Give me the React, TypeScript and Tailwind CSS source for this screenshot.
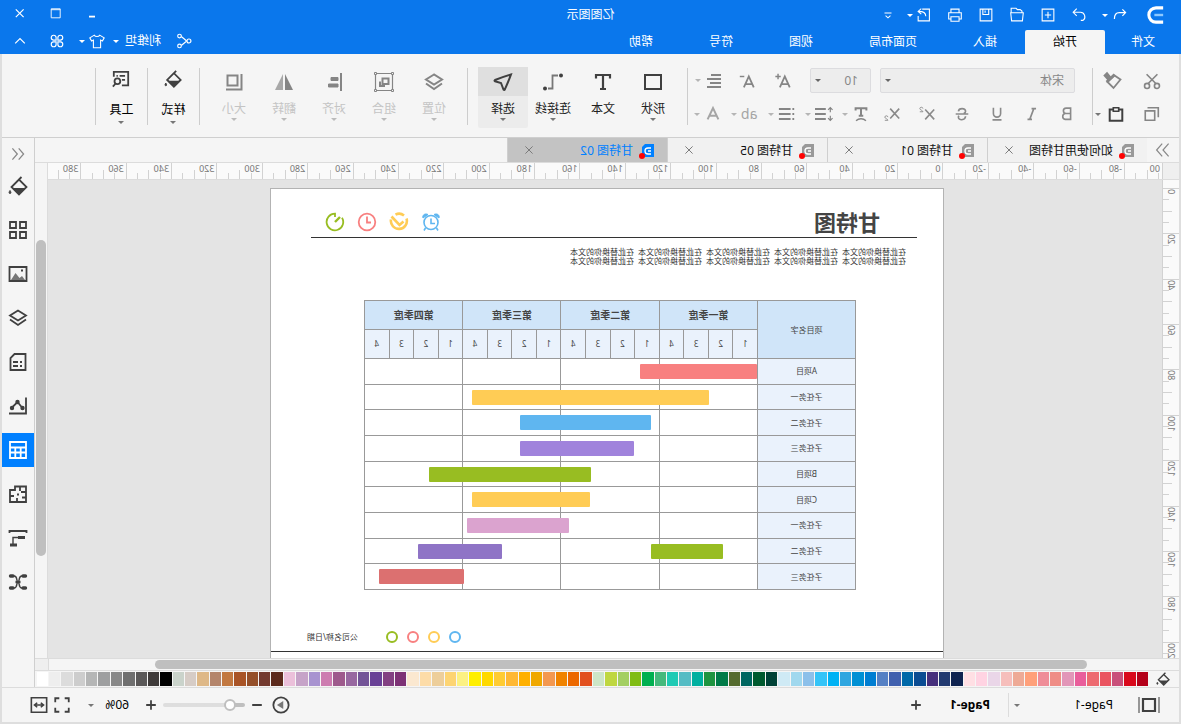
import type { ReactNode } from "react";
import { useState } from "react";

type IconProps = { children: ReactNode; size?: string; weight?: number };

function Icon({ children, size = "size-5", weight = 1.5 }: IconProps) {
    return (
        <svg viewBox="0 0 20 20" className={`${size} shrink-0`} fill="none" stroke="currentColor" strokeWidth={weight} aria-hidden="true">
            {children}
        </svg>
    );
}

const Caret = ({ className = "text-[#777]" }: { className?: string }) => (
    <svg viewBox="0 0 8 4" className={`block h-[3px] w-[6px] shrink-0 ${className}`} aria-hidden="true">
        <path d="M0 0h8L4 4z" fill="currentColor" />
    </svg>
);

const bucket = (
    <>
        <path d="M9 3.500 16.500 11 9 18.500 1.500 11zM9.500 4 6.500 1" />
        <path d="M2.500 12h13L9 18z" fill="currentColor" stroke="none" />
        <path d="M18 14.500c1.200 1.600 1.200 3 0 3s-1.200-1.400 0-3z" fill="currentColor" strokeWidth="1" />
    </>
);

const layers = (
    <>
        <path d="m10 2.500 8 5-8 5-8-5z" />
        <path d="m2 11.500 8 5.500 8-5.500" />
    </>
);

const quickTools = [
    { label: "Redo", icon: <path d="m12.500 3 4 4-4 4M16 7H8.500a5 5 0 0 0-3 9H8" /> },
    { label: "New", icon: <path d="M3.500 3.500h13v13h-13zM10 6.500v7M6.500 10h7" /> },
    { label: "Open", icon: <path d="M4.500 7.500V5.500l2-1.500h3l1.500-1.500h5.500v5M3 7.500h14l-1 9H4z" /> },
    { label: "Save", icon: <path d="M3.500 3.500h13v13h-13zM7 3.500v6h6.500v-6M11 5v2.500" /> },
    { label: "Print", icon: <path d="M5.500 7.500v-4h9v4M5.500 14.500H3v-7h14v7h-2.500M5.500 12h9v5h-9z" /> },
    { label: "Export", icon: <path d="M12 3.500H4v13h12.500V11M8 11.500C8 8 10 6 16 6M13 3l3.500 3-3.500 3" /> },
];

const menuTabs = ["插入", "页面布局", "视图", "符号", "帮助"];

function TitleBar() {
    return (
        <header className="shrink-0 bg-[#0a77ec] text-white">
            <div className="grid h-[30px] grid-cols-[1fr_auto_1fr] items-center">
                <div className="flex items-center pl-[10px]">
                    <svg viewBox="0 0 20 20" className="mr-[11px] h-[22px] w-[30px]" fill="none" stroke="white" aria-hidden="true">
                        <path d="M3.500 3.500H10a6.500 6.500 0 0 1 0 13H3.500" strokeWidth="2.800" />
                        <path d="M3.500 10h8" strokeWidth="2.200" stroke="#8cc8ff" />
                    </svg>
                    <button type="button" aria-label="Undo" className="flex w-5 justify-center">
                        <Icon size="size-4"><path d="m7 3-4 4 4 4M3.500 7h7.500c4 0 6 3 6 8" /></Icon>
                    </button>
                    <button type="button" aria-label="Undo history" className="mr-[5px] flex w-[10px] justify-center"><Caret className="text-white" /></button>
                    {quickTools.map((tool) => (
                        <button key={tool.label} type="button" aria-label={tool.label} className="flex w-[31px] justify-center">
                            <Icon size="size-[18px]" weight={1.2}>{tool.icon}</Icon>
                        </button>
                    ))}
                    <button type="button" aria-label="Export options" className="-ml-[6px] flex w-[10px] justify-center"><Caret className="text-white" /></button>
                    <button type="button" aria-label="Customize" className="flex w-[34px] justify-center">
                        <Icon size="size-[14px]"><path d="M5 7h10M6.500 11l3.500 3 3.500-3" /></Icon>
                    </button>
                </div>
                <h1 className="text-[12px]">亿图图示</h1>
                <div className="flex justify-end pr-[2px] pb-[4px]">
                    <button type="button" aria-label="Minimize" className="flex w-9 justify-center"><Icon size="size-3" weight={3}><path d="M5 16h10" /></Icon></button>
                    <button type="button" aria-label="Maximize" className="flex w-9 justify-center"><Icon size="size-3"><path d="M3 3h15v15H3zM3 4.500h15" /></Icon></button>
                    <button type="button" aria-label="Close" className="flex w-9 justify-center"><Icon size="size-3" weight={2}><path d="m4 4 13 13M17 4 4 17" /></Icon></button>
                </div>
            </div>
            <div className="flex h-6 items-stretch text-[12px]">
                <button type="button" className="w-[76px]">文件</button>
                <button type="button" className="w-20 rounded-t-xs bg-[#f5f5f5] text-black">开始</button>
                {menuTabs.map((tab) => (
                    <button key={tab} type="button" className="px-7">{tab}</button>
                ))}
                <div className="ml-auto flex items-center pb-[2px]">
                    <button type="button" aria-label="Share" className="mr-[14px]">
                        <Icon size="size-[18px]" weight={1.3}>
                            <path d="m7 10 6-5M7 10l6 5" />
                            <circle cx="4.500" cy="10" r="2.200" /><circle cx="15" cy="4.500" r="2" /><circle cx="15" cy="15.500" r="2" />
                        </Icon>
                    </button>
                    <button type="button" className="flex items-center gap-[6px]">利维坦<Caret className="text-white" /></button>
                    <button type="button" aria-label="Theme" className="mr-[5px] ml-[7px] flex items-center gap-[3px]">
                        <Icon size="size-[18px]" weight={1.2}><path d="M7 3.500c1 2 5 2 6 0l5 3-2 3.500-2-1v8.500H6V9l-2 1-2-3.500z" /></Icon>
                        <Caret className="text-white" />
                    </button>
                    <button type="button" aria-label="Apps" className="flex w-[34px] justify-center">
                        <Icon size="size-[18px]" weight={1.3}>
                            <path d="M9 9H6a2.700 2.700 0 1 1 3-3zM11 9V6a2.700 2.700 0 1 1 3 3zM9 11v3a2.700 2.700 0 1 1-3-3zM11 11h3a2.700 2.700 0 1 1-3 3z" />
                        </Icon>
                    </button>
                    <button type="button" aria-label="Collapse ribbon" className="flex w-10 justify-center"><Icon size="size-4"><path d="m4 13 6-6 6 6" /></Icon></button>
                </div>
            </div>
        </header>
    );
}

const Divider = () => <div className="h-[57px] w-px shrink-0 bg-[#cdcdcd]" />;

const textStyles = [
    { label: "Bold", icon: <path d="M6 3.500h5a3 3 0 0 1 0 6H6zM6 9.500h6a3.300 3.300 0 0 1 0 6.500H6z" /> },
    { label: "Italic", icon: <path d="M5.500 4h5M10 16h5M8 4l4.500 12" /> },
    { label: "Underline", icon: <path d="M6 3v6.500a4 4 0 0 0 8 0V3M5 16.500h10" /> },
    { label: "Strikethrough", icon: <path d="M3 10h14M14 7c-.5-4-8-4-8 0 0 1.500 1 2 2 2.500M6 12.500c.5 5 8 5 8 1 0-.800-.200-1-.600-1.500" /> },
    { label: "Superscript", icon: <><path d="m2 5 10 11M12 5 2 16" /><path d="M14.500 4c0-2 3.500-2 3.500 0 0 1.500-3.500 2-3.500 3.500H18" strokeWidth="1" /></> },
    { label: "Subscript", icon: <><path d="m2 4 10 11M12 4 2 15" /><path d="M14.500 13.500c0-2 3.500-2 3.500 0 0 1.500-3.500 2-3.500 3.500H18" strokeWidth="1" /></> },
];

const paragraphTools = [
    { label: "Text effect", tone: "text-[#858585]", icon: <><path d="M4 6V3.500h12V6M10 4v8M7.500 12h5" strokeWidth="2.200" /><path d="M4.500 17.500c3-3 8-3 11 0" /></> },
    { label: "Line spacing", tone: "text-[#858585]", icon: <><path d="M8 4.500h12M8 10h12M8 15.500h12" strokeWidth="2.200" /><path d="M3 3v5M3 12v5M.5 5.500 3 3l2.500 2.500M.5 14.500 3 17l2.500-2.500" strokeWidth="1.300" /></> },
    { label: "List", tone: "text-[#858585]", icon: <path d="M6 4.500h13M6 10h13M6 15.500h13M2 4.500h2M2 10h2M2 15.500h2" strokeWidth="2.200" /> },
    { label: "Highlight", tone: "text-[#a5a5a5]", text: "ab" },
    { label: "Font color", tone: "text-[#a5a5a5]", icon: <path d="m4 16 6-12.500L16 16M6 12h8" strokeWidth="2.200" /> },
];

function FontGroup() {
    return (
        <div className="w-[404px] shrink-0">
            <div className="flex items-center pl-[17px]">
                <div className="relative w-[195px]">
                    <select aria-label="Font" className="block h-[25px] w-full appearance-none rounded-[2px] border border-[#dcdcdf] bg-[#ededed] pl-[10px] text-[12px] text-[#888]">
                        <option>宋体</option>
                    </select>
                    <span className="pointer-events-none absolute top-[11px] right-[5px]"><Caret className="text-[#666]" /></span>
                </div>
                <div className="relative ml-[9px] w-[61px]">
                    <select aria-label="Font size" className="block h-[25px] w-full appearance-none rounded-[2px] border border-[#dcdcdf] bg-[#ededed] pl-3 text-[12px] text-[#888]">
                        <option>10</option>
                    </select>
                    <span className="pointer-events-none absolute top-[11px] right-[5px]"><Caret className="text-[#666]" /></span>
                </div>
                <button type="button" aria-label="Increase font" className="ml-[9px] flex w-9 justify-center text-[#858585]">
                    <Icon size="size-[18px]" weight={2}><path d="m2.500 17 5.500-12 5.500 12M4.500 13.500h7" /><path d="M15.500 2v6M12.500 5h6" strokeWidth="1.600" /></Icon>
                </button>
                <button type="button" aria-label="Decrease font" className="flex w-9 justify-center text-[#858585]">
                    <Icon size="size-[18px]" weight={2}><path d="m2.500 17 5.500-12 5.500 12M4.500 13.500h7" /><path d="M13 5h5" strokeWidth="1.600" /></Icon>
                </button>
                <button type="button" aria-label="Align" className="ml-[5px] flex items-center gap-[3px] text-[#858585]">
                    <Icon weight={2}><path d="M3 4h10M3 8h14M3 12h11M3 16h14" /></Icon>
                    <Caret className="text-[#b5b5b5]" />
                </button>
            </div>
            <div className="mt-[9px] flex h-6 items-center pl-[7px]">
                {textStyles.map((tool) => (
                    <button key={tool.label} type="button" aria-label={tool.label} className="flex w-[35px] justify-center text-[#8a8a8a]">
                        <Icon size="size-[18px]" weight={1.8}>{tool.icon}</Icon>
                    </button>
                ))}
                <div className="flex gap-1">
                    {paragraphTools.map((tool) => (
                        <button key={tool.label} type="button" aria-label={tool.label} className={`flex w-[33px] items-center justify-end gap-1 text-[14px] leading-5 ${tool.tone}`}>
                            {tool.icon ? <Icon size="size-[18px]">{tool.icon}</Icon> : tool.text}
                            <Caret className="text-[#b5b5b5]" />
                        </button>
                    ))}
                </div>
            </div>
        </div>
    );
}

type Tool = { label: string; icon: ReactNode; caret?: boolean; active?: boolean };

const drawTools: Tool[] = [
    { label: "形状", caret: true, icon: <path d="M2 3h16v14H2z" /> },
    { label: "文本", icon: <path d="M3 6.500V3h14v3.500M10 3v14M7 17h6" strokeWidth="2.200" /> },
    { label: "连接线", caret: true, icon: <><path d="M5 3.500h5.500v13H15" stroke="#777" strokeWidth="1.800" /><circle cx="2" cy="3.500" r="2" fill="currentColor" stroke="none" /><circle cx="18" cy="16.500" r="2" fill="currentColor" stroke="none" /></> },
    { label: "选择", caret: true, active: true, icon: <path d="M2 2.500c5 1.500 11 3.500 16 5.500.7.600.7 1 0 1.300l-6 1.700-2.500 6.500c-.5.600-1 .600-1.300 0C6 12.500 3.500 7 2 2.500z" /> },
];

const arrangeTools: Tool[] = [
    { label: "位置", icon: layers },
    { label: "组合", icon: <><path d="M1.500 1.500h17v17h-17z" strokeWidth="1.200" /><path d="M5.500 6.500h6v5.500h-6zM14 9.500v4.500H9" /><path d="M.5.500h2v2h-2zM17.500.500h2v2h-2zM.5 17.500h2v2h-2zM17.500 17.500h2v2h-2z" strokeWidth="1" fill="#f5f5f5" /></> },
    { label: "对齐", icon: <><path d="M3 1v18" /><path d="M6 5.500h7v3H6zM6 12h9.500v3H6z" fill="currentColor" strokeWidth="1" /></> },
    { label: "翻转", icon: <><path d="M9 2v16H1z" fill="currentColor" stroke="none" /><path d="M11 2v16h8z" fill="#a8a8a8" stroke="none" /></> },
    { label: "大小", icon: <><path d="M6.500 3.500h10v10h-10z" /><path d="M2.500 2v15.500H18" /></> },
];

function ToolButton({ tool, muted = false, low = false }: { tool: Tool; muted?: boolean; low?: boolean }) {
    return (
        <button
            type="button"
            className={`-mt-px flex h-[61px] shrink-0 flex-col items-center rounded-[2px] text-[12px] leading-4 ${low ? "w-[51px]" : "w-[50px]"} ${tool.active ? "bg-[#ececec]" : ""} ${muted ? "text-[#c4c4c4]" : low ? "text-black" : "text-[#222]"}`}
        >
            <span className={`flex h-[29px] w-full shrink-0 items-center justify-center ${tool.active ? "bg-[#dfdfdf]" : ""} ${muted ? "text-[#858585]" : "text-[#404040]"} ${low ? "pb-[5px]" : ""}`}>
                <Icon size={low ? "size-[18px]" : "size-5"} weight={2}>{tool.icon}</Icon>
            </span>
            <span className={low ? "mt-[6px]" : "mt-[5px]"}>{tool.label}</span>
            {tool.caret && <span className={low ? "mt-[3px]" : "mt-px"}><Caret className={muted ? "text-[#bbb]" : "text-[#777]"} /></span>}
        </button>
    );
}

const styleTool: Tool = { label: "样式", caret: true, icon: bucket };
const utilTool: Tool = {
    label: "工具",
    caret: true,
    icon: <><path d="M9 17H2V2h16v5.500M5.500 6.500h6M13.500 6.500H15M5.500 11H9" /><circle cx="14" cy="12.500" r="3.200" /><path d="m16 15 3 3.500" /></>,
};

function Ribbon() {
    return (
        <section className="flex h-[84px] shrink-0 items-start overflow-hidden border-b border-[#cfcfcf] pt-[14px]">
            <div className="w-[86px] shrink-0 pl-[7px] text-[#858585]">
                <div className="flex h-[25px] items-center">
                    <button type="button" aria-label="Cut" className="flex w-10 justify-center">
                        <Icon size="size-[18px]" weight={1.8}><path d="M4 2.500 14.500 13M16 2.500 5.500 13" /><circle cx="4.500" cy="15.500" r="2.800" /><circle cx="15.500" cy="15.500" r="2.800" /></Icon>
                    </button>
                    <button type="button" aria-label="Format painter" className="flex w-10 justify-center">
                        <Icon weight={1.8}><path d="m12 7 4-5 2.500 2.500-4 4.500z" fill="currentColor" /><path d="M8.500 3.500 16.500 11" strokeWidth="2.400" /><path d="m2.500 8.500 6-4 7 6.500-6 6z" /></Icon>
                    </button>
                </div>
                <div className="mt-[9px] flex h-6 items-center">
                    <button type="button" aria-label="Copy" className="flex w-10 justify-center">
                        <Icon size="size-[18px]" weight={1.8}><path d="M7 6.500h10.500V17H7zM3 13.500V3h12" /></Icon>
                    </button>
                    <button type="button" aria-label="Paste" className="flex w-[31px] justify-center text-[#404040]">
                        <Icon size="size-[18px]" weight={2.2}><path d="M3 5h14v12.500H3z" /><path d="M7 3h6v4H7z" fill="#f5f5f5" strokeWidth="1.800" /></Icon>
                    </button>
                    <Caret />
                </div>
            </div>
            <Divider />
            <FontGroup />
            <Divider />
            <div className="flex pr-[10px] pl-[9px]">{drawTools.map((tool) => <ToolButton key={tool.label} tool={tool} />)}</div>
            <Divider />
            <div className="flex pr-[9px] pl-2">{arrangeTools.map((tool) => <ToolButton key={tool.label} tool={{ ...tool, caret: true }} muted />)}</div>
            <Divider />
            <ToolButton tool={styleTool} low />
            <Divider />
            <ToolButton tool={utilTool} low />
            <Divider />
        </section>
    );
}

const docTabs = ["如何使用甘特图", "甘特图 01", "甘特图 05", "甘特图 02"];

function DocTabs() {
    const [current, setCurrent] = useState("甘特图 02");
    return (
        <nav className="flex h-[25px] shrink-0 border-b border-[#dcdcdc] text-[12px]">
            <button type="button" aria-label="Next documents" className="flex w-8 items-center justify-center text-[#888]">
                <Icon size="size-4"><path d="m3 2 7 8-7 8M11 2l7 8-7 8" /></Icon>
            </button>
            {docTabs.map((name) => {
                const selected = name === current;
                return (
                    <div key={name} className={`flex w-40 items-center border-r border-[#cfcfcf] pl-[13px] ${selected ? "bg-[#c3c3c3] text-[#0080ff]" : "bg-[#f1f1f1] text-[#111]"}`}>
                        <button type="button" onClick={() => setCurrent(name)} className="flex flex-1 items-center gap-[5px] pt-px whitespace-nowrap">
                            <svg viewBox="0 0 16 16" className="size-4" aria-hidden="true">
                                <path d="M0 1h9l3 3v10H0z" fill={selected ? "#0080ff" : "#999"} />
                                <path d="M3 5h3a2.500 2.500 0 0 1 0 6H3M3 8h3" fill="none" stroke="white" strokeWidth="1.300" />
                                <circle cx="12" cy="13" r="3" fill="red" />
                            </svg>
                            {name}
                        </button>
                        <button type="button" aria-label={`Close ${name}`} className="mr-[15px] text-[#777]"><Icon size="size-3" weight={1.6}><path d="m4 4 12 12M16 4 4 16" /></Icon></button>
                    </div>
                );
            })}
        </nav>
    );
}

const rulerX = Array.from({ length: 24 }, (_, i) => (i - 4) * 20);
const rulerY = Array.from({ length: 11 }, (_, i) => i * 20);

const HorizontalTicks = () => (
    <>
        <i className="h-[6px] flex-1 border-l border-[#d2d2d2]" />
        <i className="h-[9px] flex-1 border-l border-[#d2d2d2]" />
        <i className="h-[6px] flex-1 border-l border-[#d2d2d2]" />
    </>
);

function HorizontalRuler() {
    return (
        <div className="flex h-4 min-w-0 flex-1 overflow-hidden bg-[#fafafa] text-[9px] leading-3 text-[#777]">
            <div className="relative flex w-[37px] shrink-0 items-end">
                <span className="absolute top-0 left-[2px]">00</span>
                <i className="w-[3px]" />
                <HorizontalTicks />
            </div>
            <div className="flex w-[1089px] shrink-0">
                {rulerX.map((value) => (
                    <div key={value} className="relative flex flex-1 items-end border-l border-[#d2d2d2]">
                        <span className="absolute top-0 left-[2px]">{value}</span>
                        <i className="h-0 flex-1" />
                        <HorizontalTicks />
                    </div>
                ))}
            </div>
        </div>
    );
}

function VerticalRuler() {
    return (
        <div className="w-[17px] shrink-0 overflow-hidden border-r border-[#d2d2d2] bg-[#fafafa] pt-2 text-[9px] leading-3 text-[#777]">
            <div className="flex h-[499px] flex-col">
                {rulerY.map((value) => (
                    <div key={value} className="relative flex flex-1 flex-col items-end border-t border-[#d2d2d2]">
                        <span className="absolute top-0 left-[2px] rotate-180 [writing-mode:vertical-rl]">{value}</span>
                        <i className="w-0 flex-1" />
                        <i className="w-[6px] flex-1 border-t border-[#d2d2d2]" />
                        <i className="w-[9px] flex-1 border-t border-[#d2d2d2]" />
                        <i className="w-[6px] flex-1 border-t border-[#d2d2d2]" />
                    </div>
                ))}
            </div>
        </div>
    );
}

const quarters = ["第一季度", "第二季度", "第三季度", "第四季度"];
const months = [1, 2, 3, 4];

// start and length are percentages of one quarter
const rows = [
    { name: "A项目", bars: [{ start: 0, length: 120, color: "bg-[#f88080]" }] },
    { name: "子任务一", bars: [{ start: 49, length: 244, color: "bg-[#ffcc55]" }] },
    { name: "子任务二", bars: [{ start: 109, length: 135, color: "bg-[#5fb6f0]" }] },
    { name: "子任务三", bars: [{ start: 126, length: 118, color: "bg-[#a083dc]" }] },
    { name: "B项目", bars: [{ start: 171, length: 166, color: "bg-[#98bd22]" }] },
    { name: "C项目", bars: [{ start: 172, length: 121, color: "bg-[#ffcc55]" }] },
    { name: "子任务一", bars: [{ start: 193, length: 105, color: "bg-[#dba3cf]" }] },
    { name: "子任务二", bars: [{ start: 35, length: 74, color: "bg-[#98bd22]" }, { start: 262, length: 87, color: "bg-[#8f74c6]" }] },
    { name: "子任务三", bars: [{ start: 301, length: 88, color: "bg-[#dc7070]" }] },
];

function GanttTable() {
    return (
        <table className="mt-[34px] ml-[87px] h-[290px] w-[492px] table-fixed border-collapse text-center text-[8px] leading-[10px] text-[#444] [&_td]:border [&_td]:border-[#999] [&_td]:p-0 [&_th]:border [&_th]:border-[#999] [&_th]:p-0">
            <colgroup>
                <col className="w-[98px]" />
                <col span={16} />
            </colgroup>
            <thead>
                <tr className="h-[29px] bg-[#d0e5f9]">
                    <th rowSpan={2} className="font-normal">项目名字</th>
                    {quarters.map((quarter) => <th key={quarter} colSpan={4} className="text-[10px] font-bold">{quarter}</th>)}
                </tr>
                <tr className="h-[29px] bg-[#eaf2fc]">
                    {quarters.map((quarter) => months.map((month) => <th key={quarter + month} className="font-normal">{month}</th>))}
                </tr>
            </thead>
            <tbody>
                {rows.map((row, index) => (
                    <tr key={index}>
                        <th scope="row" className="bg-[#eaf2fc] font-normal">{row.name}</th>
                        {quarters.map((quarter, column) => (
                            <td key={quarter} colSpan={4} className="relative">
                                {column === 0 && row.bars.map((bar) => (
                                    <div key={bar.start} className={`absolute top-[5px] z-10 h-[15px] rounded-[1px] ${bar.color}`} style={{ left: `${bar.start}%`, width: `${bar.length}%` }} />
                                ))}
                            </td>
                        ))}
                    </tr>
                ))}
            </tbody>
        </table>
    );
}

const placeholder = Array.from({ length: 5 }, () => "在此替换你的文本");

const PlaceholderLine = () => (
    <p className="flex gap-1">
        {placeholder.map((text, index) => <span key={index}>{text}</span>)}
    </p>
);

function Page() {
    return (
        <article className="mt-2 ml-[218px] h-[520px] w-[674px] shrink-0 border border-[#b3b3b3] bg-white text-[#333]">
            <div className="mr-10 ml-[26px] flex h-[49px] items-center justify-between border-b border-[#333] pt-[18px] pr-[14px] pl-[37px]">
                <h2 className="text-[22px] leading-6 font-bold text-[#444]">甘特图</h2>
                <div className="flex items-center gap-3">
                    <span className="text-[#5fb6f0]"><Icon weight={1.6}><path d="M2 6c-1-3 2-5 5-3.500zM18 6c1-3-2-5-5-3.500z" fill="currentColor" strokeWidth="1" /><circle cx="10" cy="10.500" r="7" /><path d="M10 6.500v5H6M4.500 16 3 18.500M15.500 16l1.500 2.500" /></Icon></span>
                    <span className="text-[#ffcc55]"><Icon weight={2.6}><path d="M2.500 6.500a8 8 0 1 0 15.500 1M5.500 9.500l4 3.500 8-8.500M5 3.500c2.500-2 6-2.200 8.500-.800" /></Icon></span>
                    <span className="text-[#f88080]"><Icon weight={1.8}><circle cx="10" cy="10" r="8.300" /><path d="M10 4.500v6H6" /></Icon></span>
                    <span className="text-[#98bd22]"><Icon weight={1.8}><path d="M10 5V1.700a8.300 8.300 0 1 1-7 4" /><path d="m5 5 5 5" strokeWidth="2.400" /></Icon></span>
                </div>
            </div>
            <div className="mt-[9px] mb-[35px] pl-[37px] text-[8px] leading-[9px]">
                <PlaceholderLine />
                <PlaceholderLine />
            </div>
            <GanttTable />
            <footer className="mt-[38px] flex h-6 items-center justify-end border-b border-[#333] pr-[36px] pb-[5px]">
                <i className="mr-[9px] size-3 rounded-full border-2 border-[#5fb6f0]" />
                <i className="mr-[9px] size-3 rounded-full border-2 border-[#ffcc55]" />
                <i className="mr-[9px] size-3 rounded-full border-2 border-[#f88080]" />
                <i className="mr-7 size-3 rounded-full border-2 border-[#98bd22]" />
                <span className="text-[8px] leading-[10px]">公司名称/日期</span>
            </footer>
        </article>
    );
}

const swatches = [
    "#b40019", "#d9081b", "#c9507a", "#ea5460", "#ed6a70", "#e95e9b", "#e296b8", "#ef8d86", "#ef8d98", "#ffa07a",
    "#eeaa96", "#f6bebb", "#ead6e8", "#ffd3e2", "#ffdfe4", "#0f2350", "#223a70", "#462f7c", "#0b4c92", "#0068a8",
    "#4060ae", "#5580c4", "#007ed2", "#0090d4", "#2ea6e0", "#00b2f4", "#34c4f8", "#8cc0ea", "#a0d8ee", "#cfeaf5",
    "#004237", "#005a2f", "#006660", "#556b2f", "#007b48", "#1e9440", "#00b0a0", "#55bcc4", "#1fcab4", "#45b97c",
    "#00b050", "#80bc14", "#a3cf62", "#bfd740", "#cde6c7", "#e2501f", "#ec6800", "#f08300", "#f39850", "#f0a800",
    "#ffb000", "#ffb833", "#ffcc33", "#ffd900", "#ffef00", "#fcf182", "#fdd472", "#edce9a", "#fddca8", "#fbe8d0",
    "#7d3175", "#834082", "#694196", "#735497", "#9868a0", "#9e5a8c", "#cd7cb0", "#a893d0", "#c6a3c8", "#ebc0da",
    "#5c2a1c", "#733a2f", "#954f29", "#a95426", "#c27840", "#b4856b", "#deb887", "#d6ccc6", "#cad3cb", "#000000",
    "#3f3b3a", "#5a5858", "#6f6f6f", "#888888", "#9e9fa0", "#b5b6b6", "#cdcdcd", "#dcdcdc", "#eeeeee", "#ffffff",
];

const panels = [
    { label: "Fill", icon: bucket },
    { label: "Symbols", icon: <path d="M2 2h6v6H2zM12 2h6v6h-6zM2 12h6v6H2zM12 12h6v6h-6z" /> },
    { label: "Image", icon: <><path d="M1.500 3h17v14h-17z" /><path d="m3 16 3-4 2.500 2 4-5 4.500 7z" fill="#777" stroke="none" /><path d="M5 6.500h2" /></> },
    { label: "Layers", icon: layers },
    { label: "Notes", icon: <path d="M2.500 2h11l4 4v12h-15zM6 10h2M10 10h5M6 14h2M10 14h5" /> },
    { label: "Chart", icon: <><path d="M2 1.500V17.500h17M5.500 12l5-6 6 6" strokeWidth="1.800" /><circle cx="5.500" cy="12" r="1.300" fill="currentColor" /><circle cx="10.500" cy="6" r="1.300" fill="currentColor" /><circle cx="16" cy="12" r="1.300" fill="currentColor" /></> },
    { label: "Table", icon: <><path d="M2 2h16v16H2z" /><path d="M2 7.500h16M2 12.500h16M7.300 7.500V18M12.700 7.500V18" /></> },
    { label: "Floor plan", icon: <path d="M2 2.500h11v3.500h5v12H2zM2 8h5M8 3v4M2 13.500h4M11 18v-4M18 12h-4M9 10.500h2" /> },
    { label: "Gantt", icon: <><path d="M1.500 5V3h17v2" /><path d="M3 9.500h7M11 17h7" strokeWidth="3" /><path d="M8 9.500h7v7" strokeWidth="1.400" /></> },
    { label: "Mind map", icon: <><path d="M2.500 4h2.500M15 4h2.500M2.500 16h2.500M15 16h2.500" strokeWidth="3.400" strokeLinecap="round" /><path d="M6 4c4 0 2 6 4 6s0-6 4-6M6 16c4 0 2-6 4-6s0 6 4 6" strokeWidth="1.500" /><path d="M7.500 10h5" strokeWidth="2.500" /></> },
];

function SidePanel() {
    const [open, setOpen] = useState("Table");
    return (
        <aside className="flex w-[33px] shrink-0 flex-col border-l border-[#cfcfcf]">
            <button type="button" aria-label="Expand panel" className="flex h-[31px] shrink-0 items-center justify-center text-[#888]">
                <Icon size="size-[14px]" weight={1.8}><path d="m9 2-7 8 7 8M18 2l-7 8 7 8" /></Icon>
            </button>
            <div className="flex flex-col gap-[10px]">
                {panels.map((panel) => (
                    <button
                        key={panel.label}
                        type="button"
                        aria-label={panel.label}
                        onClick={() => setOpen(panel.label)}
                        className={`flex h-[34px] items-center justify-center ${panel.label === open ? "bg-[#0080ff] text-white" : "text-[#404040]"}`}
                    >
                        <Icon weight={1.8}>{panel.icon}</Icon>
                    </button>
                ))}
            </div>
        </aside>
    );
}

function StatusBar() {
    const [zoom, setZoom] = useState(13);
    return (
        <footer className="flex h-[35px] shrink-0 items-center border-t border-[#dcdcdc] text-[12px] text-black">
            <button type="button" aria-label="Page panel" className="ml-[18px] flex w-6 justify-center text-[#404040]">
                <svg viewBox="0 0 24 18" className="h-[18px] w-6" fill="none" stroke="currentColor" aria-hidden="true">
                    <path d="M6 3h12v12H6z" strokeWidth="2.200" /><path d="M2 1v16M22 1v16" stroke="#777" strokeWidth="1.500" />
                </svg>
            </button>
            <button type="button" className="mr-[5px] ml-6 flex w-[99px] items-center justify-between">Page-1<Caret /></button>
            <div className="mr-[18px] h-6 w-px bg-[#dcdcdc]" />
            <button type="button" className="w-[42px] text-left font-bold whitespace-nowrap">Page-1</button>
            <button type="button" aria-label="Add page" className="ml-6 text-[#404040]"><Icon size="size-4" weight={2.2}><path d="M10 4v12M4 10h12" /></Icon></button>
            <div className="ml-auto flex items-center text-[#404040]">
                <button type="button" aria-label="Play" className="mr-[7px]"><Icon size="size-[18px]" weight={2}><circle cx="10" cy="10" r="8.500" /><path d="m7.500 5.500 7 4.500-7 4.500z" fill="#777" stroke="none" /></Icon></button>
                <button type="button" aria-label="Zoom out" className="mr-1"><Icon size="size-4" weight={2.5}><path d="M4 10h12" /></Icon></button>
                <input
                    type="range"
                    aria-label="Zoom"
                    min={0}
                    max={100}
                    value={zoom}
                    onChange={(event) => setZoom(Number(event.target.value))}
                    className="h-1 w-[82px] appearance-none rounded-full bg-linear-to-r from-[#bfbfbf] from-18% to-[#dedede] to-18% [&::-webkit-slider-thumb]:size-3 [&::-webkit-slider-thumb]:appearance-none [&::-webkit-slider-thumb]:rounded-full [&::-webkit-slider-thumb]:border-2 [&::-webkit-slider-thumb]:border-[#bfbfbf] [&::-webkit-slider-thumb]:bg-white"
                />
                <button type="button" aria-label="Zoom in" className="ml-1 mr-[14px]"><Icon size="size-4" weight={2.2}><path d="M10 4v12M4 10h12" /></Icon></button>
                <button type="button" className="flex w-[41px] items-center justify-between text-black">60%<Caret /></button>
                <button type="button" aria-label="Full screen" className="mr-[5px] ml-[17px]"><Icon size="size-[18px]" weight={2}><path d="M2.500 7V2.500H7M13 2.500h4.500V7M17.500 13v4.500H13M7 17.500H2.500V13" /></Icon></button>
                <button type="button" aria-label="Fit width" className="mr-7"><Icon size="size-[18px]" weight={1.8}><path d="M1.500 2h17v16h-17zM5 10h10M8 7.500 5 10l3 2.500M12 7.500l3 2.500-3 2.500" /></Icon></button>
            </div>
        </footer>
    );
}

export default function App() {
    return (
        <div className="flex h-screen w-full -scale-x-100 flex-col overflow-hidden bg-[#f5f5f5] font-['Noto_Sans','Noto_Sans_CJK_SC',sans-serif]">
            <TitleBar />
            <div className="flex min-h-0 flex-1 flex-col border-x-2 border-b-2 border-[#dedede]">
                <Ribbon />
                <div className="flex min-h-0 flex-1">
                    <main className="flex min-w-0 flex-1 flex-col">
                        <DocTabs />
                        <div className="flex min-h-0 flex-1">
                            <div className="flex min-w-0 flex-1 flex-col">
                                <div className="flex h-[17px] shrink-0 border-b border-[#dcdcdc]">
                                    <div className="w-[17px] shrink-0 border-r border-[#d2d2d2] bg-[#efefef]" />
                                    <HorizontalRuler />
                                </div>
                                <div className="flex min-h-0 flex-1">
                                    <VerticalRuler />
                                    <div className="flex min-w-0 flex-1 items-start overflow-hidden bg-[#e4e4e4]"><Page /></div>
                                </div>
                            </div>
                            <div className="flex w-[13px] shrink-0 flex-col border-l border-[#dcdcdc] px-px pt-[77px] pb-[102px]">
                                <div className="flex-1 rounded-full bg-[#bfbfbf]" />
                            </div>
                        </div>
                        <div className="flex h-[13px] shrink-0 items-center border-y border-[#dcdcdc]">
                            <div className="mr-[106px] ml-[92px] h-[9px] flex-1 rounded-full bg-[#bfbfbf]" />
                            <div className="h-full w-[14px] border-l border-[#dcdcdc] bg-[#efefef]" />
                        </div>
                        <div className="flex h-4 shrink-0 items-center">
                            <button type="button" aria-label="Fill color" className="flex w-[31px] justify-center text-[#404040]"><Icon size="size-[14px]" weight={2}>{bucket}</Icon></button>
                            <div className="mr-px flex h-[14px] flex-1 gap-px">
                                {swatches.map((color) => (
                                    <button key={color} type="button" aria-label={color} className="flex-1" style={{ backgroundColor: color }} />
                                ))}
                            </div>
                        </div>
                    </main>
                    <SidePanel />
                </div>
                <StatusBar />
            </div>
        </div>
    );
}
